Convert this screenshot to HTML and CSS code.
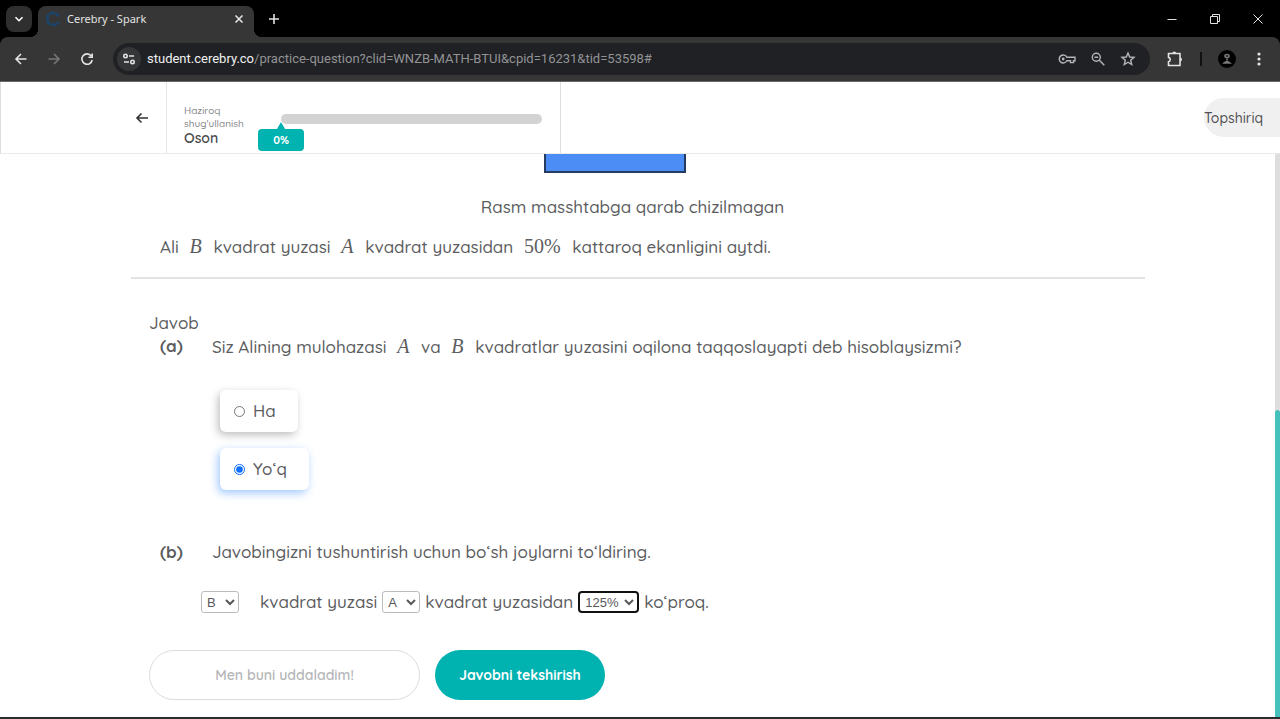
FILE: index.html
```html
<!DOCTYPE html>
<html lang="uz">
<head>
<meta charset="utf-8">
<meta name="viewport" content="width=device-width, initial-scale=1">
<title>Cerebry - Spark</title>
<link rel="stylesheet" href="styles.css">
</head>
<body>
<div class="window">
  <div class="tabstrip">
    <button class="tab-search" aria-label="Search tabs"><svg width="12" height="12" viewBox="0 0 12 12"><path d="M2.5 4.2 6 7.7l3.5-3.5"/></svg></button>
    <div class="tab">
      <svg class="favicon" width="16" height="16" viewBox="0 0 16 16"><path d="M13.5 5.2A6 6 0 1 0 13.5 10.8" stroke-dasharray="5 .7"/></svg>
      <span class="tab-title">Cerebry - Spark</span>
      <button class="plain" aria-label="Close tab"><svg width="10" height="10" viewBox="0 0 10 10"><path d="m1.5 1.5 7 7m0-7-7 7"/></svg></button>
    </div>
    <button class="plain new-tab" aria-label="New tab"><svg width="12" height="12" viewBox="0 0 12 12"><path d="M6 1v10M1 6h10"/></svg></button>
    <div class="window-controls">
      <button class="plain" aria-label="Minimize"><svg class="thin" width="12" height="12" viewBox="0 0 12 12"><path d="M1.5 6.5h9"/></svg></button>
      <button class="plain" aria-label="Restore"><svg class="thin" width="12" height="12" viewBox="0 0 12 12"><path d="M1.5 3.5h7v7h-7zM3.5 3.5v-2h7v7h-2"/></svg></button>
      <button class="plain" aria-label="Close"><svg class="thin" width="12" height="12" viewBox="0 0 12 12"><path d="m1.5 1.5 9 9m0-9-9 9"/></svg></button>
    </div>
  </div>

  <div class="toolbar">
    <div class="nav">
      <button class="plain" aria-label="Back"><svg width="14" height="14" viewBox="0 0 14 14"><path d="M12.5 7H2m5-5L2 7l5 5"/></svg></button>
      <button class="plain dim" aria-label="Forward"><svg width="14" height="14" viewBox="0 0 14 14"><path d="M1.5 7H12M7 2l5 5-5 5"/></svg></button>
      <button class="plain" aria-label="Reload"><svg width="14" height="14" viewBox="0 0 14 14"><path d="M11.3 4A5.2 5.2 0 1 0 12.2 8M12.2 1.5v3.7H8.5"/></svg></button>
    </div>
    <div class="omnibox">
      <button class="site-info" aria-label="Site information"><svg width="14" height="14" viewBox="0 0 14 14"><circle cx="3.5" cy="4" r="1.7"/><path d="M7 4h5M2 10h5"/><circle cx="10.5" cy="10" r="1.7"/></svg></button>
      <span class="url"><b>student.cerebry.co</b>/practice-question?clid=WNZB-MATH-BTUI&amp;cpid=16231&amp;tid=53598#</span>
      <div class="omni-actions">
        <button class="plain" aria-label="Passwords"><svg width="18" height="16" viewBox="0 0 18 16"><path d="M8.8 6.2h8.2v3.6h-1.5v1.8h-3V9.8H8.8a4 4 0 1 1 0-3.6z"/><circle class="dot" cx="5.2" cy="8" r="1.4"/></svg></button>
        <button class="plain" aria-label="Zoom"><svg width="16" height="16" viewBox="0 0 16 16"><circle cx="6.3" cy="6.3" r="4"/><path d="m9.3 9.3 5 5M4.5 6.3h3.6"/></svg></button>
        <button class="plain" aria-label="Bookmark"><svg width="16" height="16" viewBox="0 0 16 16"><path d="m8 2 1.7 4 4.3.4-3.3 2.8 1 4.3L8 11.2l-3.7 2.3 1-4.3L2 6.4 6.3 6z"/></svg></button>
      </div>
    </div>
    <div class="tool-actions">
      <button class="plain" aria-label="Extensions"><svg width="18" height="18" viewBox="0 0 18 18"><path d="M2.5 3.5H14v12H2.5v-3.8a2.2 2.2 0 0 0 0-4.3z"/><path class="dot" d="M6.2 3.5a2 2 0 0 1 4 0zM14 7.4a2 2 0 0 1 0 4z"/></svg></button>
      <span class="divider"></span>
      <button class="avatar" aria-label="Profile"><svg width="18" height="18" viewBox="0 0 18 18"><ellipse cx="9" cy="6" rx="2" ry="1.5"/><path d="M9 8.5v2M6 13q3-3 6 0z"/></svg></button>
      <button class="plain" aria-label="Menu"><svg width="14" height="14" viewBox="0 0 14 14"><g class="dot"><circle cx="7" cy="2" r="1.6"/><circle cx="7" cy="7" r="1.6"/><circle cx="7" cy="12" r="1.6"/></g></svg></button>
    </div>
  </div>

  <header class="header">
    <div class="header-back"><button class="plain" aria-label="Orqaga"><svg width="14" height="14" viewBox="0 0 14 14"><path d="M13 7H2m4.5-4.5L2 7l4.5 4.5"/></svg></button></div>
    <div class="header-progress">
      <div class="level"><span>Haziroq shug'ullanish</span><strong>Oson</strong></div>
      <div class="progress"><div class="track"></div><div class="badge">0%</div></div>
    </div>
    <button class="assignment">Topshiriq</button>
  </header>

  <div class="view">
    <main class="content">
      <section class="question">
        <div class="figure"></div>
        <p class="caption">Rasm masshtabga qarab chizilmagan</p>
        <p class="statement">Ali <i class="math">B</i> kvadrat yuzasi <i class="math">A</i> kvadrat yuzasidan <span class="math">50%</span> kattaroq ekanligini aytdi.</p>
      </section>
      <section class="answer">
        <h2>Javob</h2>
        <div class="part">
          <strong>(a)</strong>
          <div>
            <p>Siz Alining mulohazasi <i class="math">A</i> va <i class="math">B</i> kvadratlar yuzasini oqilona taqqoslayapti deb hisoblaysizmi?</p>
            <div class="options">
              <label class="option"><input type="radio" name="opinion">Ha</label>
              <label class="option selected"><input type="radio" name="opinion" checked>Yo‘q</label>
            </div>
          </div>
        </div>
        <div class="part">
          <strong>(b)</strong>
          <p>Javobingizni tushuntirish uchun bo‘sh joylarni to‘ldiring.</p>
        </div>
        <div class="blanks">
          <select class="first" aria-label="Birinchi kvadrat"><option>B</option><option>A</option></select>
          <span>kvadrat yuzasi</span>
          <select aria-label="Ikkinchi kvadrat"><option>A</option><option>B</option></select>
          <span>kvadrat yuzasidan</span>
          <select class="focused" aria-label="Foiz"><option>125%</option><option>50%</option></select>
          <span>ko‘proq.</span>
        </div>
        <div class="actions">
          <button class="skip">Men buni uddaladim!</button>
          <button class="check">Javobni tekshirish</button>
        </div>
      </section>
    </main>
    <div class="scrollbar"><div class="thumb"></div></div>
  </div>
  <div class="taskbar"></div>
</div>
</body>
</html>
```
FILE: styles.css
```css
* { box-sizing: border-box; }
body { margin: 0; background: #fff; color: #5c5d5f; font: 500 17px/24px Quicksand, Lato, sans-serif; }
p, h2 { margin: 0; font-size: 17px; font-weight: 500; }
button { font-family: inherit; cursor: pointer; }
svg { display: block; fill: none; stroke: currentColor; stroke-width: 1.6; }
.thin { stroke-width: 1; }
.dot { fill: currentColor; stroke: none; }
.plain { display: flex; padding: 0; border: 0; background: none; color: inherit; }
.window { display: flex; flex-direction: column; min-height: 100vh; background: linear-gradient(#000 60px, #fff 60px); }

.tabstrip { display: flex; align-items: center; height: 37px; padding: 0 16px 0 6px; background: #000; color: #e3e3e3; font: 11px/16px "Noto Sans", "Open Sans", sans-serif; }
.tab-search { display: flex; align-items: center; justify-content: center; width: 26px; height: 26px; padding: 0; border: 0; border-radius: 8px; background: #2f2f2f; color: #fff; }
.tab { position: relative; display: flex; align-items: center; align-self: flex-end; gap: 6px; width: 216px; height: 31px; margin-left: 6px; padding: 0 10px 5px 7px; border-radius: 8px 8px 0 0; background: #363636; }
.tab::before, .tab::after { content: ""; position: absolute; bottom: 0; width: 8px; height: 8px; }
.tab::before { left: -8px; background: radial-gradient(circle at 0 0, #000 8px, #363636 8px); }
.tab::after { right: -8px; background: radial-gradient(circle at 100% 0, #000 8px, #363636 8px); }
.favicon { color: #1c4468; stroke-width: 3; }
.tab-title { flex: 1; }
.new-tab { margin-left: 14px; }
.window-controls { display: flex; gap: 31px; margin-left: auto; }

.toolbar { display: flex; align-items: center; height: 45px; padding: 0 14px; border-bottom: 1px solid #68686a; border-radius: 8px 8px 0 0; background: #363636; color: #e3e3e3; }
.nav { display: flex; gap: 19px; width: 99px; }
.dim { color: #777; }
.omnibox { display: flex; flex: 1; align-items: center; height: 32px; padding: 0 14px 0 4px; border-radius: 16px; background: #202124; font: 13px/18px Roboto, "Noto Sans", sans-serif; }
.site-info { display: flex; align-items: center; justify-content: center; width: 24px; height: 24px; padding: 0; border: 0; border-radius: 50%; background: #353638; color: #e3e3e3; }
.url { flex: 1; padding-left: 6px; color: #929395; white-space: nowrap; }
.url b { color: #f1f1f1; font-weight: 400; }
.omni-actions { display: flex; gap: 14px; color: #b4b5b7; }
.omni-actions svg { stroke-width: 1.4; }
.tool-actions { display: flex; align-items: center; gap: 16px; padding-left: 16px; }
.divider { width: 2px; height: 14px; background: #111; }
.avatar { display: flex; padding: 0; border: 0; border-radius: 50%; background: #000; color: #777; }

.header { display: flex; height: 72px; border-bottom: 1px solid #e9e9e9; border-left: 1px solid #ddd; background: #fff; }
.header-back { display: flex; align-items: center; justify-content: flex-end; width: 166px; padding-right: 17px; border-right: 1px solid #e4e4e4; color: #333; }
.header-progress { display: flex; width: 394px; padding: 22px 18px 0 17px; border-right: 1px solid #dedede; }
.level { display: flex; flex-direction: column; width: 97px; padding-right: 30px; color: #88898b; font-size: 10px; line-height: 13px; }
.level strong { color: #4a4b4d; font-size: 14px; font-weight: 600; line-height: 17px; }
.progress { flex: 1; padding-top: 10px; }
.track { height: 10px; border-radius: 5px; background: #d3d3d3; }
.badge { position: relative; width: 46px; margin: 5px 0 0 -23px; border-radius: 4px; background: #00b2b0; color: #fff; font-size: 11px; font-weight: 700; line-height: 22px; text-align: center; }
.badge::before { content: ""; position: absolute; top: -7px; left: 19px; border: 4px solid transparent; border-top: 0; border-bottom: 7px solid #00b2b0; }
.assignment { align-self: center; width: 76px; height: 39px; margin-left: auto; padding: 0; border: 0; border-radius: 20px 0 0 20px; background: #f0f0f0; color: #505153; font-size: 14px; font-weight: 500; text-align: left; }

.view { display: flex; flex: 1; }
.content { flex: 1; padding: 0 130px 16px 131px; }
.question { padding: 0 12px 18px 29px; border-bottom: 2px solid #e3e3e3; }
.figure { width: 142px; height: 19px; margin-left: 384px; border: 2px solid #253b60; border-top: 0; background: #4c8df5; }
.caption { padding: 22px 28px 0 0; text-align: center; }
.statement { padding-top: 15px; }
.math { margin: 0 7px 0 6px; font-family: "Liberation Serif", serif; font-size: 20px; font-weight: 400; line-height: 24px; }
.answer { padding: 33px 0 0 18px; }
.answer h2 { line-height: 22px; }
.part { display: flex; padding-left: 11px; }
.part > strong { width: 52px; }
.options { display: flex; flex-direction: column; align-items: flex-start; gap: 16px; padding: 31px 0 50px 8px; }
.option { display: flex; align-items: center; gap: 8px; height: 42px; padding: 0 22px 0 14px; border-radius: 6px; background: #fff; box-shadow: -2px 3px 8px rgb(0 0 0 / 26%); }
.option.selected { box-shadow: -2px 3px 8px rgb(40 130 255 / 45%); }
.option input { width: 11px; height: 11px; margin: 0; accent-color: #0d6efd; }
.blanks { display: flex; align-items: center; gap: 5px; padding: 26px 0 0 52px; }
.blanks select { width: 38px; height: 22px; padding: 0 0 0 1px; border: 1px solid #bbb; border-radius: 3px; background: #fff; color: #58595b; font: 13px "Liberation Sans", sans-serif; }
.blanks .first { margin-right: 16px; }
.blanks .focused { width: 61px; border: 2px solid #111; border-radius: 4px; }
.actions { display: flex; gap: 15px; padding-top: 36px; }
.actions button { height: 50px; border-radius: 25px; font-size: 14px; font-weight: 600; }
.skip { width: 271px; border: 1px solid #dcdcdc; background: #fff; color: #b5b6b8; }
.actions .check { width: 170px; border: 0; background: #00b2b0; color: #fff; font-weight: 700; }
.scrollbar { display: flex; align-items: flex-end; width: 5px; background: #dedede; }
.thumb { width: 100%; height: 54.5%; border-radius: 3px 3px 0 0; background: #45c1bb; }
.taskbar { height: 2px; background: #2b2b2d; }
```
